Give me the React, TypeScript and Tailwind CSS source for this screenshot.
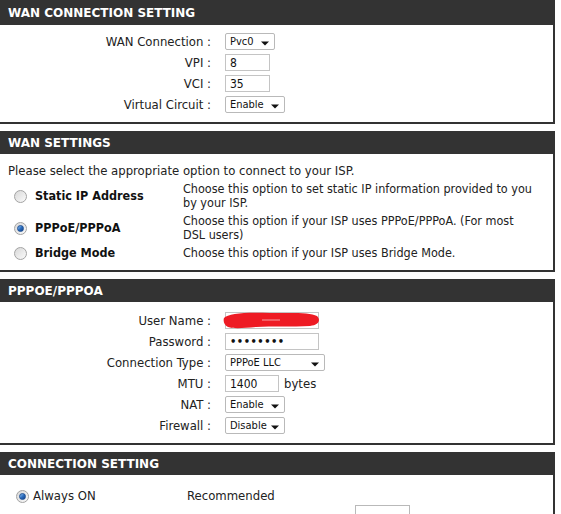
import React from "react";

const BODY = { fontFamily: '"DejaVu Sans Condensed", "DejaVu Sans", sans-serif' };
const HEAD = { fontFamily: '"DejaVu Sans", Verdana, sans-serif' };

function Panel({ title, children, first }: { title: string; children: React.ReactNode; first?: boolean }) {
  return (
    <div className={`w-[555px] ${first ? "" : "mt-[7px]"}`}>
      <div
        className={`${first ? "h-[25px]" : "h-[23px]"} bg-[#333333] text-white text-[12px] font-bold pl-[8px] flex items-center`}
        style={HEAD}
      >
        {title}
      </div>
      <div className="border-r-2 border-b-2 border-[#333333] bg-white">{children}</div>
    </div>
  );
}

function Row({ label, children }: { label: string; children: React.ReactNode }) {
  return (
    <div className="flex items-center h-[21px]">
      <div className="w-[211px] text-right text-[13px] leading-[16px] text-[#222]">{label} :</div>
      <div className="ml-[14px] flex items-center">{children}</div>
    </div>
  );
}

function TextBox({ value, w, children }: { value?: string; w: number; children?: React.ReactNode }) {
  return (
    <div
      className="relative h-[17px] border border-[#c4c4c4] bg-white text-[12px] leading-[14px] text-[#111] pl-[4px] flex items-center"
      style={{ width: w }}
    >
      {value}
      {children}
    </div>
  );
}

function Select({ value, w }: { value: string; w: number }) {
  return (
    <div
      className="relative h-[17px] border border-[#b9b9b9] rounded-[2px] bg-white text-[11px] leading-[14px] text-[#111] pl-[4px] flex items-center"
      style={{ width: w }}
    >
      {value}
      <svg className="absolute right-[5px] top-[7px]" width="8" height="5" viewBox="0 0 8 5">
        <path d="M0 0.5 H8 L4 4.5 Z" fill="#111" />
      </svg>
    </div>
  );
}

function Radio({ checked }: { checked?: boolean }) {
  return (
    <span className="inline-flex w-[13px] h-[13px] rounded-full border border-[#a3a3a3] bg-gradient-to-br from-[#d8d8d8] to-[#fbfbfb] items-center justify-center">
      {checked && (
        <span className="w-[7px] h-[7px] rounded-full bg-gradient-to-br from-[#8fc3f2] via-[#2d6fc0] to-[#123f86] border border-[#1d4f94]" />
      )}
    </span>
  );
}

function OptionRow({ label, desc, checked }: { label: string; desc: React.ReactNode; checked?: boolean }) {
  return (
    <div className="flex items-center py-[2px]">
      <div className="w-[183px] flex items-center">
        <span className="ml-[14px] flex">
          <Radio checked={checked} />
        </span>
        <span className="ml-[8px] text-[12.5px] leading-[14px] font-bold text-[#111]">{label}</span>
      </div>
      <div className="w-[350px] text-[12.5px] leading-[14px] text-[#222]">{desc}</div>
    </div>
  );
}

export default function App() {
  return (
    <div className="w-[561px] h-[514px] overflow-hidden bg-white" style={BODY}>
      <Panel title="WAN CONNECTION SETTING" first>
        <div className="pt-[6px] pb-[7px]">
          <Row label="WAN Connection">
            <Select value="Pvc0" w={50} />
          </Row>
          <Row label="VPI">
            <TextBox value="8" w={45} />
          </Row>
          <Row label="VCI">
            <TextBox value="35" w={45} />
          </Row>
          <Row label="Virtual Circuit">
            <Select value="Enable" w={60} />
          </Row>
        </div>
      </Panel>

      <Panel title="WAN SETTINGS">
        <div className="pt-[9px] pb-[8px]">
          <div className="pl-[8px] text-[13px] leading-[15px] text-[#222] mb-[2px]">
            Please select the appropriate option to connect to your ISP.
          </div>
          <OptionRow
            label="Static IP Address"
            desc="Choose this option to set static IP information provided to you by your ISP."
          />
          <OptionRow
            label="PPPoE/PPPoA"
            checked
            desc="Choose this option if your ISP uses PPPoE/PPPoA. (For most DSL users)"
          />
          <OptionRow label="Bridge Mode" desc="Choose this option if your ISP uses Bridge Mode." />
        </div>
      </Panel>

      <Panel title="PPPOE/PPPOA">
        <div className="pt-[8px] pb-[7px]">
          <Row label="User Name">
            <TextBox w={94}>
              <svg className="absolute -left-[4px] -top-[1px]" width="100" height="18" viewBox="0 0 100 18">
                <path
                  d="M2 6 C6 1 25 0 48 1 C68 1 88 0 95 4 C99 8 97 13 88 14 C70 15 50 14 34 15 C22 16 12 17 6 15 C2 13 1 9 2 6 Z"
                  fill="#ee1b24"
                />
                <path d="M40 8 L58 8" stroke="#f6a2a6" strokeWidth="1" />
              </svg>
            </TextBox>
          </Row>
          <Row label="Password">
            <TextBox w={94}>
              <span className="font-bold tracking-[0.5px] text-[11px]">••••••••</span>
            </TextBox>
          </Row>
          <Row label="Connection Type">
            <Select value="PPPoE LLC" w={100} />
          </Row>
          <Row label="MTU">
            <TextBox value="1400" w={54} />
            <span className="ml-[5px] text-[13px] text-[#222]">bytes</span>
          </Row>
          <Row label="NAT">
            <Select value="Enable" w={60} />
          </Row>
          <Row label="Firewall">
            <Select value="Disable" w={60} />
          </Row>
        </div>
      </Panel>

      <Panel title="CONNECTION SETTING">
        <div className="pt-[13px] pb-[4px]">
          <div className="flex items-center h-[16px]">
            <div className="w-[187px] flex items-center">
              <span className="ml-[16px] flex">
                <Radio checked />
              </span>
              <span className="ml-[4px] text-[13px] text-[#222]">Always ON</span>
            </div>
            <span className="text-[13px] text-[#222]">Recommended</span>
          </div>
          <div className="mt-[1px] ml-[355px] w-[55px] h-[17px] border border-[#b9b9b9]" />
        </div>
      </Panel>
    </div>
  );
}
